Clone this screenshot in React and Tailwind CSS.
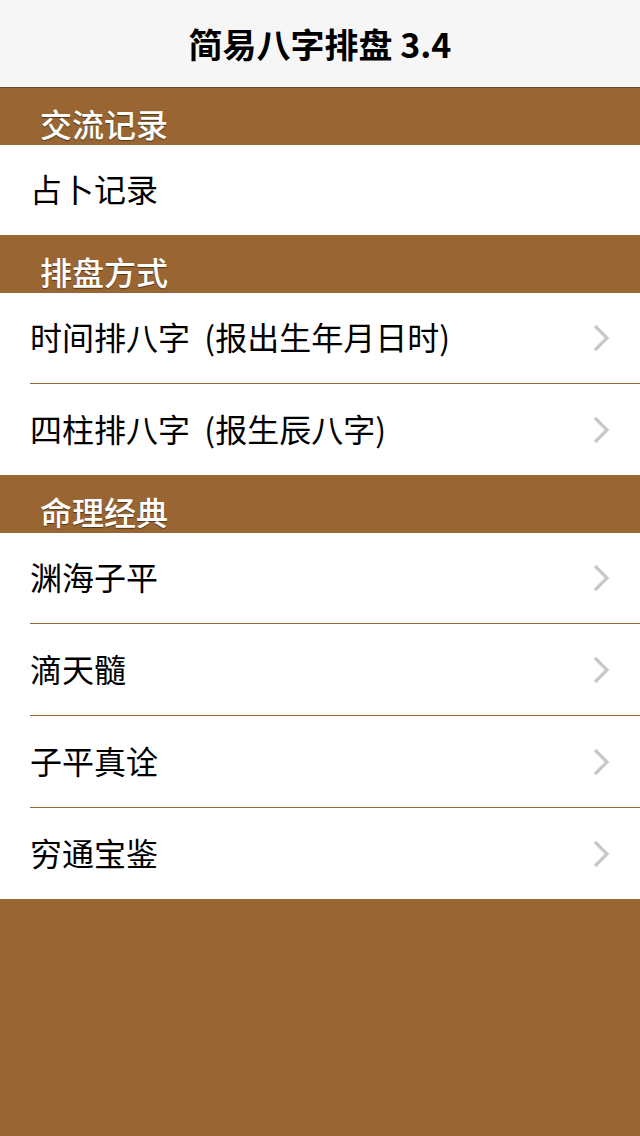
import React from "react";

const Chevron = () => (
  <svg width="18" height="28" viewBox="0 0 18 28" className="shrink-0">
    <path d="M3 2 L15 14 L3 26" fill="none" stroke="#c7c7cc" strokeWidth="3.2" strokeLinecap="butt" strokeLinejoin="miter" />
  </svg>
);

const Header = ({ title, h = "h-[58px]" }) => (
  <div className={`${h} bg-[#996633] flex items-end pl-[40px] pb-[6px] shrink-0`}>
    <span className="text-[32px] leading-none text-white font-medium [text-shadow:0_1px_1px_rgba(60,40,20,0.8)]">{title}</span>
  </div>
);

const Row = ({ title, h = "h-[91px]", chevron = true, last = false }) => (
  <div className="bg-white pl-[30px] shrink-0">
    <div className={`${h} flex items-center pr-[30px] ${last ? "" : "border-b border-[#996633]"}`}>
      <span className="flex-1 text-[32px] leading-none text-black whitespace-pre pb-[4px]">{title}</span>
      {chevron && <Chevron />}
    </div>
  </div>
);

export default function App() {
  return (
    <div className="w-[640px] h-[1136px] bg-[#996633] flex flex-col font-['Noto_Sans_CJK_SC','Noto_Sans',sans-serif]">
      <div className="h-[88px] bg-[#f6f6f6] border-b border-[#5a4a3a] flex items-center justify-center shrink-0">
        <span className="text-[34px] font-bold text-black leading-none">简易八字排盘 3.4</span>
      </div>
      <Header title="交流记录" h="h-[57px]" />
      <Row title="占卜记录" h="h-[90px]" chevron={false} last />
      <Header title="排盘方式" />
      <Row title="时间排八字  (报出生年月日时)" h="h-[91px]" />
      <Row title="四柱排八字  (报生辰八字)" h="h-[91px]" last />
      <Header title="命理经典" />
      <Row title="渊海子平" h="h-[91px]" />
      <Row title="滴天髓" h="h-[92px]" />
      <Row title="子平真诠" h="h-[92px]" />
      <Row title="穷通宝鉴" h="h-[91px]" last />
    </div>
  );
}
